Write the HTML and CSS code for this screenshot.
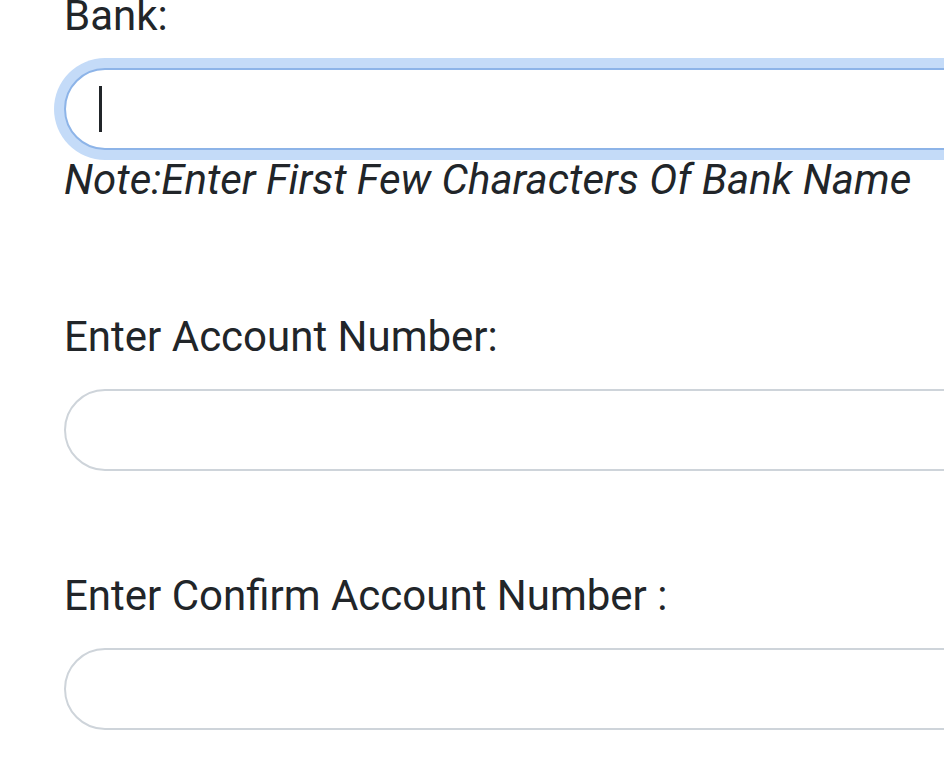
FILE: index.html
```html
<!DOCTYPE html>
<html lang="en">
<head>
<meta charset="utf-8">
<title>Bank details</title>
<link rel="stylesheet" href="styles.css">
</head>
<body>
<form class="form">
  <div class="group group-first">
    <label class="label" for="bank">Bank:</label>
    <div class="control control-focus"><span class="caret"></span></div>
    <p class="note">Note:Enter First Few Characters Of Bank Name</p>
  </div>
  <div class="group">
    <label class="label" for="acc">Enter Account Number:</label>
    <div class="control"></div>
  </div>
  <div class="group">
    <label class="label" for="cacc">Enter Confirm Account Number :</label>
    <div class="control"></div>
  </div>
</form>
</body>
</html>
```
FILE: styles.css
```css
html, body {
  margin: 0;
  padding: 0;
  background: #ffffff;
  overflow: hidden;
}
body {
  font-family: Roboto, "Liberation Sans", sans-serif;
  font-size: 42px;
  line-height: 1.5;
  color: #212529;
}
.form {
  margin-top: -16px;
  padding-left: 64px;
}
.group {
  margin-bottom: 93px;
}
.group-first {
  margin-bottom: 94px;
}
.label {
  display: block;
  margin-bottom: 21px;
}
.control {
  box-sizing: border-box;
  width: 1000px;
  height: 82px;
  border: 2px solid #ced4da;
  border-radius: 41px;
  background: #fff;
  display: flex;
  align-items: center;
  padding-left: 33px;
}
.control-focus {
  border-color: #8db4e8;
  box-shadow: 0 0 0 10px #c4dbf8;
}
.caret {
  display: block;
  width: 3px;
  height: 46px;
  background: #212529;
}
.note {
  margin: -2px 0 0;
  font-style: italic;
}
```
